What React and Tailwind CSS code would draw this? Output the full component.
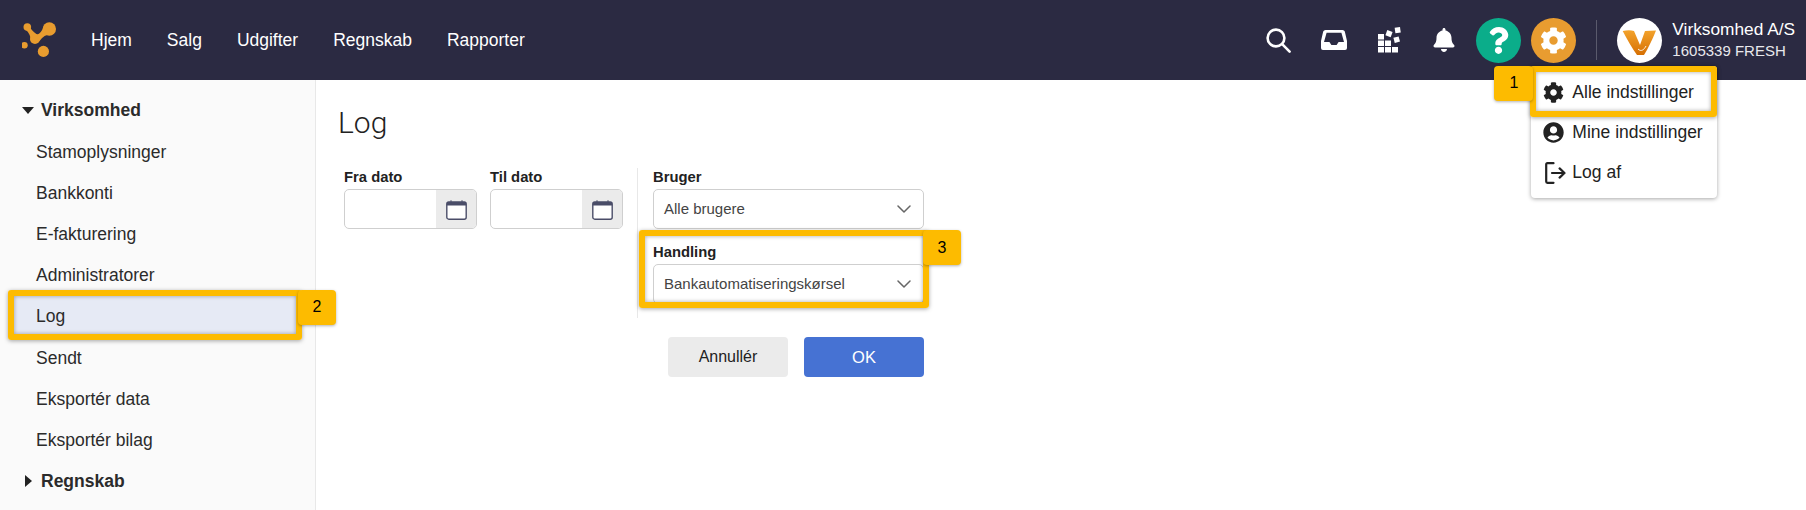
import { FaBell, FaCog, FaQuestion, FaUserCircle } from 'react-icons/fa';

const sideItems = ['Stamoplysninger', 'Bankkonti', 'E-fakturering', 'Administratorer', 'Log', 'Sendt', 'Eksportér data', 'Eksportér bilag'];
const navItems = ['Hjem', 'Salg', 'Udgifter', 'Regnskab', 'Rapporter'];

function Logo() {
  return (
    <svg width="34" height="40" viewBox="22 23 34 36" className="shrink-0">
      <g fill="#e89c2f">
        <circle cx="49.3" cy="30" r="6.7" />
        <circle cx="27.3" cy="28" r="3.8" />
        <circle cx="35" cy="40" r="5" />
        <circle cx="24.4" cy="46.3" r="3.3" />
        <circle cx="43.4" cy="52.4" r="5.6" />
        <path d="M25 30 L29.5 26.5 Q30.5 31 37 35.5 Q41 35 44.5 26 L51 35 Q44 35.5 39.5 42 L31 43 Q31 35 25 30 Z" />
      </g>
    </svg>
  );
}

function SearchIcon() {
  return (
    <svg width="25" height="25" viewBox="0 0 25 25" fill="none" stroke="#fff" strokeWidth="2.6" strokeLinecap="round">
      <circle cx="10" cy="10" r="8.4" />
      <path d="M16.2 16.2 L23.6 23.6" />
    </svg>
  );
}

function InboxIcon() {
  return (
    <svg width="26" height="20" viewBox="0 0 26 20">
      <path
        fill="#fff"
        fillRule="evenodd"
        d="M4.5 0 H21.5 Q23.3 0 23.8 1.6 L26 11 V18 Q26 20 24 20 H2 Q0 20 0 18 V11 L2.2 1.6 Q2.7 0 4.5 0 Z M5.6 2.8 H20.4 L23 12 H17.6 L15.6 15 H10.4 L8.4 12 H3 Z"
      />
    </svg>
  );
}

function AppsIcon() {
  return (
    <svg width="23" height="26" viewBox="0 0 23 26" fill="#fff">
      <rect x="0" y="7" width="6" height="5.5" />
      <rect x="0" y="13.5" width="6" height="5.5" />
      <rect x="7" y="13.5" width="6" height="5.5" />
      <rect x="0" y="20" width="6" height="5.5" />
      <rect x="7" y="20" width="6" height="5.5" />
      <rect x="14" y="20" width="6" height="5.5" />
      <rect x="8.2" y="3.8" width="5.6" height="5.6" transform="rotate(20 11 6.6)" />
      <rect x="16" y="10" width="5.4" height="5.4" transform="rotate(-15 18.7 12.7)" />
      <rect x="17" y="0.4" width="5.4" height="5.4" transform="rotate(-8 19.7 3.1)" />
    </svg>
  );
}

function CalendarIcon() {
  return (
    <svg width="21" height="21" viewBox="0 0 21 21">
      <rect x="0.8" y="3" width="19.4" height="17.2" rx="2" fill="#fff" stroke="#4a4d68" strokeWidth="1.4" />
      <path d="M0.8 5 Q0.8 3 2.8 3 H18.2 Q20.2 3 20.2 5 V6.6 H0.8 Z" fill="#4a4d68" />
      <path d="M5 1.2 V3.5 M16 1.2 V3.5" stroke="#4a4d68" strokeWidth="1" />
    </svg>
  );
}

function Chevron() {
  return (
    <svg width="14" height="8" viewBox="0 0 14 8" fill="none" stroke="#666" strokeWidth="1.5" strokeLinecap="round" strokeLinejoin="round">
      <path d="M1 1 L7 7 L13 1" />
    </svg>
  );
}

function Avatar() {
  return (
    <div className="ml-5 flex h-[45px] w-[45px] shrink-0 items-center justify-center rounded-full bg-white">
      <svg width="45" height="45" viewBox="0 0 45 45">
        <defs>
          <linearGradient id="v-grad" x1="0" y1="0" x2="0" y2="1">
            <stop offset="0" stopColor="#f3a32c" />
            <stop offset="1" stopColor="#d66f02" />
          </linearGradient>
        </defs>
        <path
          fill="url(#v-grad)"
          d="M5.7 13 C10 12 14 12 17 13 L23 27 L28 13 L39 12.5 C36 20 31 31 27 37 L20 37 C15 30 10 21 5.7 13 Z"
        />
        <path d="M21 31 C24 34 27 32 29 28" fill="none" stroke="#fff" strokeWidth="0.9" />
      </svg>
    </div>
  );
}

function LogOutIcon() {
  return (
    <svg width="21" height="22" viewBox="0 0 21 22" fill="none" stroke="#222" strokeWidth="2.2" strokeLinecap="round" strokeLinejoin="round">
      <path d="M8.5 1.2 H2.4 Q1.2 1.2 1.2 2.4 V19.6 Q1.2 20.8 2.4 20.8 H8.5" />
      <path d="M7 11 H19.5 M14.6 6.4 L19.5 11 L14.6 15.6" />
    </svg>
  );
}

// gul markering med nummer, ligger oven på det der skal fremhæves
function Callout({ number, className, badgeClass }) {
  return (
    <div className={`pointer-events-none absolute ${className}`}>
      <div className="absolute inset-0 rounded-[3px] border-[6px] border-[#fdbb00] shadow-[0_1px_4px_rgba(0,0,0,0.35),inset_0_0_4px_rgba(0,0,0,0.35)]" />
      <div className={`absolute flex h-[35px] items-center justify-center rounded-[4px] bg-[#fdbb00] text-[16px] text-black shadow-[0_1px_3px_rgba(0,0,0,0.3)] ${badgeClass}`}>
        {number}
      </div>
    </div>
  );
}

function Field({ label, children, className = '' }) {
  return (
    <div className={className}>
      <div className="flex h-[23px] items-start pt-[3px] text-[14.8px] leading-[17px] font-bold text-[#222]">{label}</div>
      {children}
    </div>
  );
}

function DateInput() {
  return (
    <div className="flex h-10 w-[133px] overflow-hidden rounded-[5px] border border-[#cfcfcf] bg-white">
      <div className="flex-1" />
      <div className="flex w-[40px] items-center justify-center bg-[#ebebeb]">
        <CalendarIcon />
      </div>
    </div>
  );
}

function SelectBox({ value }) {
  return (
    <div className="flex h-10 items-center justify-between rounded-[5px] border border-[#cfcfcf] bg-white pr-3 pl-[10px] text-[15px] text-[#444]">
      <span className="pt-px">{value}</span>
      <Chevron />
    </div>
  );
}

export default function App() {
  return (
    <div className="flex h-[510px] flex-col overflow-hidden bg-white font-['Liberation_Sans',Arial,sans-serif] text-[#222]">
      <header className="relative z-10 flex h-20 shrink-0 items-center bg-[#2b2a42] pr-[11px] pl-[22px] text-white">
        <Logo />
        <nav className="ml-[35px] flex gap-[35px] text-[17.5px]">
          {navItems.map((item) => (
            <span key={item}>{item}</span>
          ))}
        </nav>
        <div className="ml-auto flex items-center">
          <SearchIcon />
          <div className="ml-[30px]"><InboxIcon /></div>
          <div className="ml-[31px]"><AppsIcon /></div>
          <FaBell className="ml-[31px] text-white" size={24} />
          <div className="ml-[20px] flex h-[45px] w-[45px] items-center justify-center rounded-full bg-[#0bad8a]">
            <FaQuestion className="text-white" size={27} />
          </div>
          <div className="relative ml-[10px] flex h-[45px] w-[45px] items-center justify-center rounded-full bg-[#e89c30]">
            <FaCog className="text-white" size={27} />
            <div className="absolute top-[48px] left-0 h-[132px] w-[186px] rounded-[4px] bg-white pt-[7px] text-[17.5px] text-[#222] shadow-[0_1px_4px_rgba(0,0,0,0.35)]">
              <div className="flex h-10 items-center gap-[8px] pl-3">
                <FaCog size={21} className="shrink-0" />
                <span>Alle indstillinger</span>
              </div>
              <div className="flex h-10 items-center gap-[8px] pl-3">
                <FaUserCircle size={21} className="shrink-0" />
                <span>Mine indstillinger</span>
              </div>
              <div className="flex h-10 items-center gap-[8px] pl-[14px]">
                <LogOutIcon />
                <span className="-ml-[2px]">Log af</span>
              </div>
              <Callout
                number="1"
                className="top-0 -left-px h-[51px] w-[187px]"
                badgeClass="top-0 -left-[36px] w-[39px]"
              />
            </div>
          </div>
          <div className="ml-5 h-10 w-px bg-[#5a5a6c]" />
          <Avatar />
          <div className="ml-[10px] flex flex-col">
            <span className="text-[17.3px] leading-[22px]">Virksomhed A/S</span>
            <span className="text-[15px] leading-[22px] text-[#e8e8ec]">1605339 FRESH</span>
          </div>
        </div>
      </header>

      <div className="flex flex-1 overflow-hidden">
        <aside className="w-[316px] shrink-0 border-r border-[#e8e8e8] bg-[#fafafa] pt-[10px] text-[17.5px] text-[#2b2b2b]">
          <div className="flex h-[41.2px] items-center pl-[22px] text-[17.5px] font-bold">
            <span className="mr-[7px] h-0 w-0 border-x-[6.5px] border-t-[7px] border-x-transparent border-t-[#222]" />
            Virksomhed
          </div>
          {sideItems.map((item) => (
            <div key={item} className="relative flex h-[41.2px] items-center pl-9">
              {item === 'Log' && (
                <>
                  <div className="absolute top-0 left-[14px] h-[38px] w-[282px] bg-[#e6eaf5]" />
                  <span className="relative">{item}</span>
                  <Callout
                    number="2"
                    className="-top-[6px] left-2 h-[50px] w-[294px]"
                    badgeClass="top-0 left-[290px] w-[38px]"
                  />
                </>
              )}
              {item !== 'Log' && item}
            </div>
          ))}
          <div className="flex h-[41.2px] items-center pl-[25px] text-[17.5px] font-bold">
            <span className="mr-[9px] h-0 w-0 border-y-[6.5px] border-l-[7px] border-y-transparent border-l-[#222]" />
            Regnskab
          </div>
        </aside>

        <main className="flex-1 pt-6 pl-6">
          <h1 className="-mt-px -ml-[2px] font-['Roboto',sans-serif] text-[30px] leading-10 font-light text-[#222]">Log</h1>
          <div className="mt-[23px] ml-1 w-[580px]">
            <div className="flex">
              <div className="flex gap-[13px]">
                <Field label="Fra dato"><DateInput /></Field>
                <Field label="Til dato"><DateInput /></Field>
              </div>
              <div className="mt-[2px] ml-[14px] w-px bg-[#e8e8e8]" />
              <div className="w-[287px] pb-[14px] pl-[15px]">
                <Field label="Bruger"><SelectBox value="Alle brugere" /></Field>
                <Field label="Handling" className="relative mt-3">
                  <SelectBox value="Bankautomatiseringskørsel" />
                  <Callout
                    number="3"
                    className="-top-[11px] -left-[14px] h-[78px] w-[290px]"
                    badgeClass="top-0 left-[284px] w-[38px]"
                  />
                </Field>
              </div>
            </div>
            <div className="mt-[19px] flex justify-end gap-4">
              <button className="h-10 w-[120px] rounded-[4px] bg-[#ebebeb] text-[16px] text-[#222]">Annullér</button>
              <button className="h-10 w-[120px] rounded-[4px] bg-[#4672d3] text-[16.5px] text-white">OK</button>
            </div>
          </div>
        </main>
      </div>
    </div>
  );
}
